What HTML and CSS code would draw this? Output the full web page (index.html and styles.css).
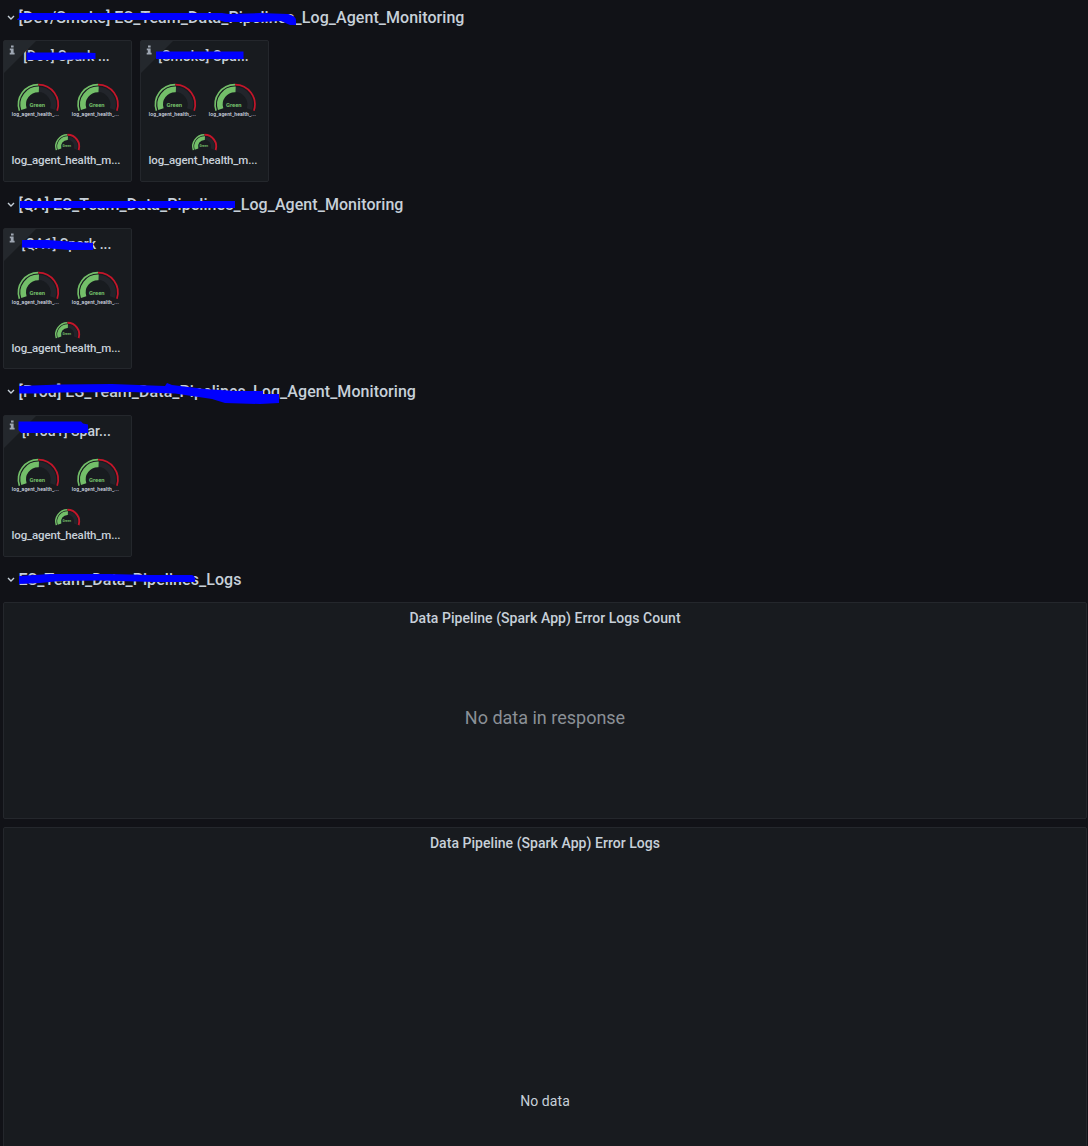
FILE: index.html
```html
<!DOCTYPE html>
<html lang="en">
<head>
<meta charset="utf-8">
<title>Log Agent Monitoring</title>
<link rel="stylesheet" href="styles.css">
</head>
<body>
<svg class="defs" width="0" height="0" aria-hidden="true">
  <defs>
    <g id="info"><path fill="#9fa7b3" d="M2 0h2.6v2.2H2zM.8 3.2h3.8v4.2h1V9H.7V7.400h1.100V4.800H.8z"/></g>
    <g id="gauge" fill="none">
      <path stroke="#22252b" stroke-width="5.400" d="M0-15.100A15.100 15.100 0 0 1 14.360 4.670"/>
      <path stroke="#73bf69" stroke-width="5.600" d="M-14.360 4.670A15.100 15.100 0 0 1 .6-15.100"/>
      <path stroke="#73bf69" stroke-width="1.600" d="M-18.900 6.140A19.900 19.900 0 0 1 0-19.900"/>
      <path stroke="#c4162a" stroke-width="1.700" d="M0-19.900A19.900 19.900 0 0 1 18.900 6.140"/>
    </g>
    <g id="gauge-small" fill="none">
      <path stroke="#22252b" stroke-width="3.400" d="M0-8.400A8.400 8.400 0 0 1 7.990 2.600"/>
      <path stroke="#73bf69" stroke-width="3.800" d="M-7.990 2.600A8.400 8.400 0 0 1 .4-8.400"/>
      <path stroke="#73bf69" stroke-width="1.500" d="M-11.130 3.620A11.700 11.700 0 0 1 0-11.700"/>
      <path stroke="#c4162a" stroke-width="1.900" d="M0-11.700A11.700 11.700 0 0 1 11.130 3.620"/>
    </g>
    <g id="gauges">
      <use href="#gauge" x="35.300" y="64.500"/>
      <use href="#gauge" x="95" y="64.500"/>
      <text class="value" x="26.500" y="67" textLength="15.500">Green</text>
      <text class="value" x="86" y="67" textLength="15.500">Green</text>
      <text class="tiny" x="8.800" y="75.800" textLength="47">log_agent_health_...</text>
      <text class="tiny" x="68.800" y="75.800" textLength="47">log_agent_health_...</text>
      <use href="#gauge-small" x="64.500" y="106.500"/>
      <text class="value-small" x="59.500" y="107.400" textLength="8.500">Green</text>
      <text class="label" x="8.500" y="124.300" textLength="109">log_agent_health_m...</text>
    </g>
  </defs>
</svg>

<main class="dashboard">
  <section class="row">
    <h2 class="row-title"><svg class="chevron" viewBox="0 0 8 6"><path d="M1 1l3 3 3-3"/></svg><span class="name" style="--w:446px">[Dev/Smoke] ES_Team_Data_Pipelines_Log_Agent_Monitoring</span>
      <svg class="marker" width="480" height="40"><path d="M19 13H222L229 14 260 13 288 14Q296 16 296 20V25L290 25 281 21 260 22 225 22 218 20H19Q15 20 19 18Z"/></svg></h2>
    <div class="panels">
      <article class="panel small"><svg class="corner" viewBox="0 0 32 32"><path d="M0 0H32L0 32Z"/><use href="#info" x="5" y="4.400"/></svg><h3>[Dev] Spark ...</h3><svg class="body" viewBox="0 0 129 142"><use href="#gauges"/></svg><svg class="marker" width="129" height="40"><path d="M23.500 12.500H80L92.500 13V19H88L60 20H23.500Z"/></svg></article>
      <article class="panel small"><svg class="corner" viewBox="0 0 32 32"><path d="M0 0H32L0 32Z"/><use href="#info" x="5" y="4.400"/></svg><h3>[Smoke] Spa...</h3><svg class="body" viewBox="0 0 129 142"><use href="#gauges"/></svg><svg class="marker" width="129" height="40"><path d="M16 11.500H103.500V19H16Z"/></svg></article>
    </div>
  </section>

  <section class="row">
    <h2 class="row-title"><svg class="chevron" viewBox="0 0 8 6"><path d="M1 1l3 3 3-3"/></svg><span class="name" style="--w:385px">[QA] ES_Team_Data_Pipelines_Log_Agent_Monitoring</span>
      <svg class="marker" width="480" height="40"><path d="M20 14H235V21H20Z"/></svg></h2>
    <div class="panels">
      <article class="panel small"><svg class="corner" viewBox="0 0 32 32"><path d="M0 0H32L0 32Z"/><use href="#info" x="5" y="4.400"/></svg><h3>[QA1] Spark ...</h3><svg class="body" viewBox="0 0 129 142"><use href="#gauges"/></svg><svg class="marker" width="129" height="40"><path d="M19 12H45L65 13.500 90 15V22H66L48 20.500 19 19.500Z"/></svg></article>
    </div>
  </section>

  <section class="row">
    <h2 class="row-title"><svg class="chevron" viewBox="0 0 8 6"><path d="M1 1l3 3 3-3"/></svg><span class="name" style="--w:397.500px">[Prod] ES_Team_Data_Pipelines_Log_Agent_Monitoring</span>
      <svg class="marker" width="480" height="40"><path d="M19 11L60 9.500 112 9 165 11 167 8 172 10 205 14 235 16 263 16V19H279V28L260 29 225 28 212 24 175 18.500 130 17 60 17.500 40 18.500 19 18.500Z"/></svg></h2>
    <div class="panels">
      <article class="panel small"><svg class="corner" viewBox="0 0 32 32"><path d="M0 0H32L0 32Z"/><use href="#info" x="5" y="4.400"/></svg><h3>[Prod1] Spar...</h3><svg class="body" viewBox="0 0 129 142"><use href="#gauges"/></svg><svg class="marker" width="129" height="40"><path d="M15.500 6.500H78L80 8.500 85 9.500V18H18L15.500 15Z"/></svg></article>
    </div>
  </section>

  <section class="row logs">
    <h2 class="row-title"><svg class="chevron" viewBox="0 0 8 6"><path d="M1 1l3 3 3-3"/></svg><span class="name" style="--w:223px">ES_Team_Data_Pipelines_Logs</span>
      <svg class="marker" width="480" height="40"><path d="M19 14L50 12 110 12 150 13H192Q196 14 195 20L155 20 100 18.500 60 19 40 21 19 22Z"/></svg></h2>
    <article class="panel count"><h3>Data Pipeline (Spark App) Error Logs Count</h3><p class="message">No data in response</p></article>
    <article class="panel errors"><h3>Data Pipeline (Spark App) Error Logs</h3><p class="empty">No data</p></article>
  </section>
</main>
<script src="fit.js"></script>
</body>
</html>
```
FILE: fit.js
```js
document.querySelectorAll('.name').forEach(function (el) {
  var width = parseFloat(el.style.getPropertyValue('--w'));
  var natural = el.getBoundingClientRect().width;
  el.style.letterSpacing = (width - natural) / el.textContent.length + 'px';
});
```
FILE: styles.css
```css
* { box-sizing: border-box; }
body {
  margin: 0;
  height: 1146px;
  overflow: hidden;
  background: #111217;
  color: #c7d0d9;
  font-family: Roboto, sans-serif;
}
.defs { display: block; height: 0; }
.dashboard { padding: 0 1px 0 3px; }
.row { height: 187.3px; }
.row-title {
  position: relative;
  display: flex;
  align-items: center;
  gap: 4px;
  height: 40.4px;
  margin: 0 0 0 -3px;
  padding: 0 0 5px 7px;
  font-size: 16px;
  font-weight: 500;
  line-height: 24px;
  white-space: nowrap;
}
.chevron { width: 8px; height: 6px; fill: none; stroke: #c7d0d9; stroke-width: 1.4; }
.name { margin-left: -.5px; }
.marker {
  position: absolute;
  top: 0;
  left: 0;
  fill: #00f;
}
.panels { display: flex; gap: 8px; }
.panel {
  position: relative;
  background: #181b1f;
  border: 1px solid #24272c;
  border-radius: 2px;
}
.panel h3 {
  margin: 0;
  text-align: center;
  font-size: 14px;
  font-weight: 500;
  line-height: 30px;
  letter-spacing: .045px;
  white-space: nowrap;
}
.small { width: 129px; height: 141.600px; }
.small h3 { padding-right: 2px; }
.small .marker { top: -1px; left: -1px; }
.corner { position: absolute; top: 0; left: 0; width: 32px; height: 32px; fill: #24282d; }
.body { position: absolute; top: -1px; left: -1px; width: 129px; height: 142px; }
.value { font-size: 5.800px; font-weight: 700; fill: #73bf69; }
.value-small { font-size: 3.200px; font-weight: 700; fill: #73bf69; }
.tiny { font-size: 5px; font-weight: 500; fill: #d5dce3; }
.label { font-size: 11.500px; font-weight: 500; fill: #c7d0d9; }
.count { height: 217px; margin-bottom: 8px; }
.errors { height: 340px; }
.message {
  margin: 73px 0 0;
  text-align: center;
  color: #8b9096;
  font-size: 18px;
  line-height: 24px;
}
.empty {
  margin: 233px 0 0;
  text-align: center;
  font-size: 14px;
  line-height: 20px;
  letter-spacing: .08px;
}
```
